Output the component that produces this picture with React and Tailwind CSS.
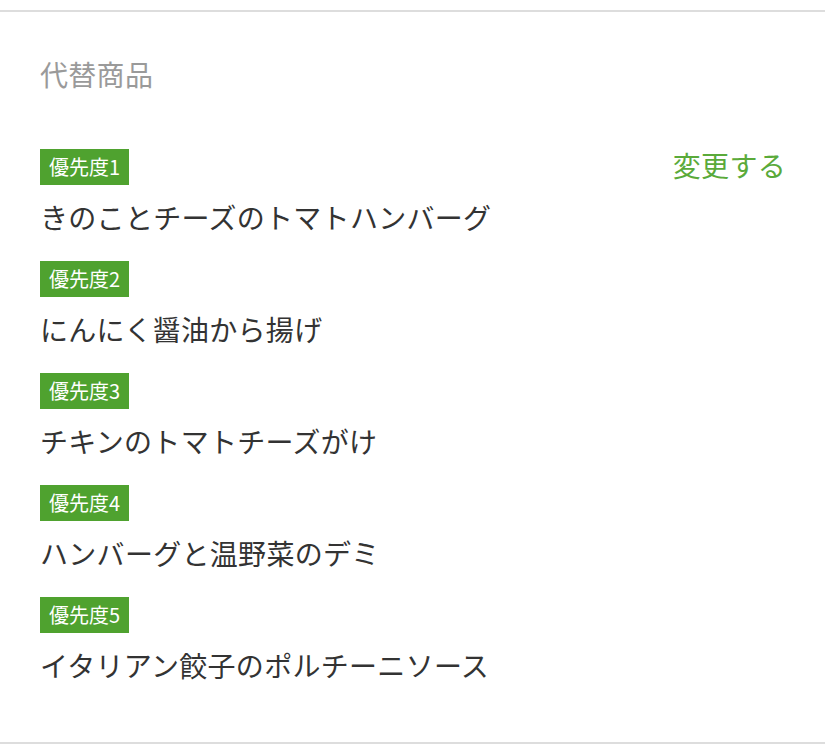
import React from 'react';

const items = [
    'きのことチーズのトマトハンバーグ',
    'にんにく醤油から揚げ',
    'チキンのトマトチーズがけ',
    'ハンバーグと温野菜のデミ',
    'イタリアン餃子のポルチーニソース',
];

const font = { fontFamily: '"Noto Sans CJK JP", "Noto Sans", sans-serif' };

const App = () => {
    return (
        <div className="min-h-screen bg-white pt-[10px]" style={font}>
            <section className="border-t-2 border-b-2 border-[#dddddd] pl-[40px] pr-[39px] pt-[48px] pb-[63px]">
                {/* Title */}
                <h2 className="text-[28px] leading-[28px] tracking-[0.3px] text-[#9a9a9a] font-normal">代替商品</h2>

                {/* Priority list */}
                <ul className="mt-[61px] flex flex-col gap-[30px]">
                    {items.map((name, i) => (
                        <li key={i}>
                            <div className="flex items-start justify-between">
                                <span className="inline-block h-[36px] px-[9px] bg-[#4fa22f] text-white text-[20px] leading-[36px]">
                                    優先度{i + 1}
                                </span>
                                {i === 0 && (
                                    <button className="text-[28px] leading-[28px] tracking-[0.3px] text-[#5aaa3a] mt-[2px]">変更する</button>
                                )}
                            </div>
                            <p className="mt-[18px] text-[28px] leading-[28px] tracking-[0.3px] text-[#333333]">{name}</p>
                        </li>
                    ))}
                </ul>
            </section>
        </div>
    );
};

export default App;
